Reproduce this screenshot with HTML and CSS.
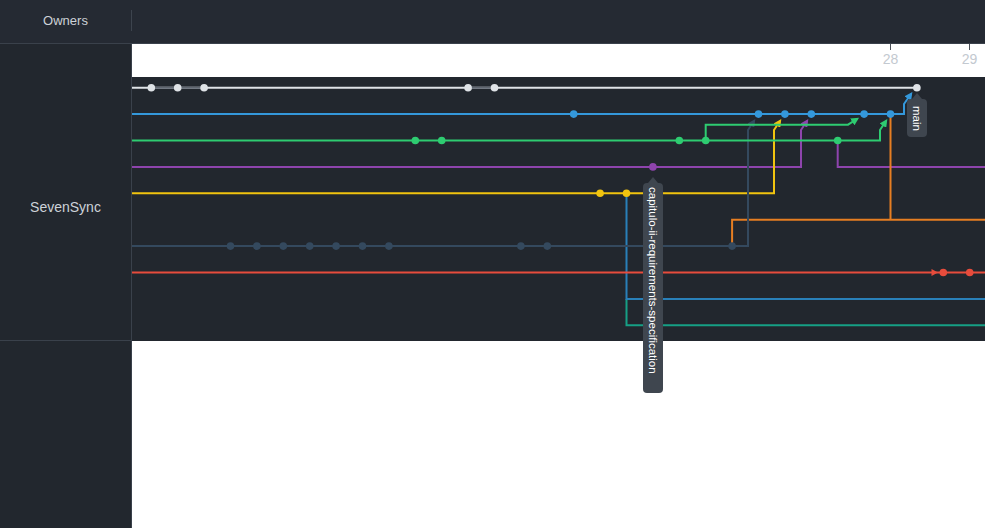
FILE: index.html
```html
<!DOCTYPE html>
<html lang="en">
<head>
<meta charset="utf-8">
<title>Network graph</title>
<link rel="stylesheet" href="styles.css">
</head>
<body>
<div class="app">
  <header class="top">
    <div class="top-owners">Owners</div>
    <div class="top-divider"></div>
    <div class="top-rest"></div>
  </header>
  <div class="content">
    <aside class="owners">
      <div class="owners-spacer"></div>
      <div class="owner-row">SevenSync</div>
    </aside>
    <main class="net">
      <div class="axis">
        <div class="tick tick-28"><span>28</span></div>
        <div class="tick tick-29"><span>29</span></div>
      </div>
      <div class="graph">
        <svg class="graph-svg" width="853" height="264" viewBox="132 77 853 264" xmlns="http://www.w3.org/2000/svg">
          <defs>
            <marker id="a-blue" viewBox="0 0 10 10" refX="7" refY="5" markerWidth="8" markerHeight="8" markerUnits="userSpaceOnUse" orient="auto"><path d="M0,0 L10,5 L0,10 z" fill="#3498db"/></marker>
            <marker id="a-slate" viewBox="0 0 10 10" refX="7" refY="5" markerWidth="8" markerHeight="8" markerUnits="userSpaceOnUse" orient="auto"><path d="M0,0 L10,5 L0,10 z" fill="#34495e"/></marker>
            <marker id="a-yellow" viewBox="0 0 10 10" refX="7" refY="5" markerWidth="8" markerHeight="8" markerUnits="userSpaceOnUse" orient="auto"><path d="M0,0 L10,5 L0,10 z" fill="#f1c40f"/></marker>
            <marker id="a-purple" viewBox="0 0 10 10" refX="7" refY="5" markerWidth="8" markerHeight="8" markerUnits="userSpaceOnUse" orient="auto"><path d="M0,0 L10,5 L0,10 z" fill="#8e44ad"/></marker>
            <marker id="a-green" viewBox="0 0 10 10" refX="7" refY="5" markerWidth="8" markerHeight="8" markerUnits="userSpaceOnUse" orient="auto"><path d="M0,0 L10,5 L0,10 z" fill="#2ecc71"/></marker>
          </defs>
          <g fill="none" stroke-width="2">
            <path d="M626.5 298.9 V325.3 H985" stroke="#16a085"/>
            <path d="M626.5 193.3 V298.9 H985" stroke="#2980b9"/>
            <path d="M132 272.5 H985" stroke="#e74c3c"/>
            <path d="M732.1 246.1 V219.7 H985" stroke="#e67e22"/>
            <path d="M132 166.9 H801 V130 L807 121" stroke="#8e44ad" marker-end="url(#a-purple)"/>
            <path d="M837.7 140.5 V166.9 H985" stroke="#8e44ad"/>
            <path d="M132 193.3 H774 V130 L780 121" stroke="#f1c40f" marker-end="url(#a-yellow)"/>
            <path d="M132 246.1 H748 V130 L754 121" stroke="#34495e" marker-end="url(#a-slate)"/>
            <path d="M132 140.5 H880 V130 L886 121" stroke="#2ecc71" marker-end="url(#a-green)"/>
            <path d="M705.7 140.5 V124.7 H848 L857 119" stroke="#2ecc71" marker-end="url(#a-green)"/>
            <path d="M890.5 114.1 V219.7" stroke="#e67e22"/>
            <path d="M132 114.1 H904 V104 L911 94" stroke="#3498db" marker-end="url(#a-blue)"/>
            <path d="M132 87.7 H916.9" stroke="#dfe3e7"/>
            <path d="M151.3 87.7 H204.1 M468.1 87.7 H494.5" stroke="#5f6670"/>
          </g>
          <polygon points="931.5,269 938,272.5 931.5,276" fill="#e74c3c"/>
          <g fill="#dfe3e7">
            <circle cx="151.3" cy="87.7" r="3.8"/>
            <circle cx="177.7" cy="87.7" r="3.8"/>
            <circle cx="204.1" cy="87.7" r="3.8"/>
            <circle cx="468.1" cy="87.7" r="3.8"/>
            <circle cx="494.5" cy="87.7" r="3.8"/>
            <circle cx="916.9" cy="87.7" r="3.8"/>
          </g>
          <g fill="#3498db">
            <circle cx="573.7" cy="114.1" r="3.8"/>
            <circle cx="758.5" cy="114.1" r="3.8"/>
            <circle cx="784.9" cy="114.1" r="3.8"/>
            <circle cx="811.3" cy="114.1" r="3.8"/>
            <circle cx="864.1" cy="114.1" r="3.8"/>
            <circle cx="890.5" cy="114.1" r="3.8"/>
          </g>
          <g fill="#2ecc71">
            <circle cx="415.3" cy="140.5" r="3.8"/>
            <circle cx="441.7" cy="140.5" r="3.8"/>
            <circle cx="679.3" cy="140.5" r="3.8"/>
            <circle cx="705.7" cy="140.5" r="3.8"/>
            <circle cx="837.7" cy="140.5" r="3.8"/>
          </g>
          <circle cx="652.9" cy="166.9" r="3.8" fill="#8e44ad"/>
          <g fill="#f1c40f">
            <circle cx="600.1" cy="193.3" r="3.8"/>
            <circle cx="626.5" cy="193.3" r="3.8"/>
          </g>
          <g fill="#34495e">
            <circle cx="230.5" cy="246.1" r="3.8"/>
            <circle cx="256.9" cy="246.1" r="3.8"/>
            <circle cx="283.3" cy="246.1" r="3.8"/>
            <circle cx="309.7" cy="246.1" r="3.8"/>
            <circle cx="336.1" cy="246.1" r="3.8"/>
            <circle cx="362.5" cy="246.1" r="3.8"/>
            <circle cx="388.9" cy="246.1" r="3.8"/>
            <circle cx="520.9" cy="246.1" r="3.8"/>
            <circle cx="547.3" cy="246.1" r="3.8"/>
            <circle cx="732.1" cy="246.1" r="3.8"/>
          </g>
          <g fill="#e74c3c">
            <circle cx="943.3" cy="272.5" r="3.8"/>
            <circle cx="969.7" cy="272.5" r="3.8"/>
          </g>
        </svg>
        <div class="tag tag-main">main</div>
        <div class="tag tag-cap">capitulo-ii-requirements-specification</div>
      </div>
      <div class="below"></div>
    </main>
  </div>
</div>
</body>
</html>
```

FILE: styles.css
```css
* { box-sizing: border-box; }
html, body { margin: 0; padding: 0; }
body {
  font-family: "Liberation Sans", Arial, sans-serif;
  background: #22272e;
  color: #cdd2d8;
}
.app {
  height: 100vh;
  display: grid;
  grid-template-rows: 44px 1fr;
  overflow: hidden;
}
.top {
  display: flex;
  align-items: center;
  background: #252a33;
  border-bottom: 1px solid #3a414b;
  height: 44px;
}
.top-owners {
  width: 131px;
  text-align: center;
  font-size: 13px;
  color: #cdd2d8;
  padding-bottom: 3px;
}
.top-divider {
  width: 1px;
  height: 21px;
  background: #3d444e;
  margin-bottom: 2px;
}
.top-rest { flex: 1; }

.content {
  display: grid;
  grid-template-columns: 132px 1fr;
  min-height: 0;
}
.owners {
  background: #22272e;
  border-right: 1px solid #3a414b;
  display: flex;
  flex-direction: column;
}
.owners-spacer { height: 33px; }
.owner-row {
  height: 264px;
  border-bottom: 1px solid #3a414b;
  display: flex;
  align-items: center;
  justify-content: center;
  padding-bottom: 4px;
  font-size: 14px;
  color: #cdd2d8;
}

.net {
  background: #ffffff;
  display: flex;
  flex-direction: column;
  min-width: 0;
}
.axis {
  height: 33px;
  position: relative;
  background: #ffffff;
}
.tick {
  position: absolute;
  top: 0;
  width: 1px;
  height: 6px;
  background: #4a4f57;
}
.tick span {
  position: absolute;
  top: 8px;
  left: -15px;
  width: 31px;
  text-align: center;
  font-size: 14px;
  line-height: 14px;
  color: #c3c9d0;
}
.tick-28 { left: 758px; }
.tick-29 { left: 837px; }

.graph {
  height: 264px;
  background: #22272e;
  position: relative;
  overflow: visible;
}
.graph-svg {
  display: block;
  overflow: visible;
}
.below { flex: 1; background: #ffffff; }

.tag {
  position: absolute;
  z-index: 2;
  width: 20px;
  background: #3f464f;
  color: #ffffff;
  border-radius: 4px;
  writing-mode: vertical-rl;
  font-size: 11.5px;
  line-height: 20px;
  white-space: nowrap;
}
.tag::before {
  content: "";
  position: absolute;
  left: 5px;
  top: -6px;
  border-left: 5px solid transparent;
  border-right: 5px solid transparent;
  border-bottom: 6px solid #3f464f;
}
.tag-main {
  left: 775px;
  top: 22px;
  height: 38px;
  padding-top: 7px;
}
.tag-cap {
  left: 511px;
  top: 106px;
  height: 210px;
  padding-top: 4px;
}
```
